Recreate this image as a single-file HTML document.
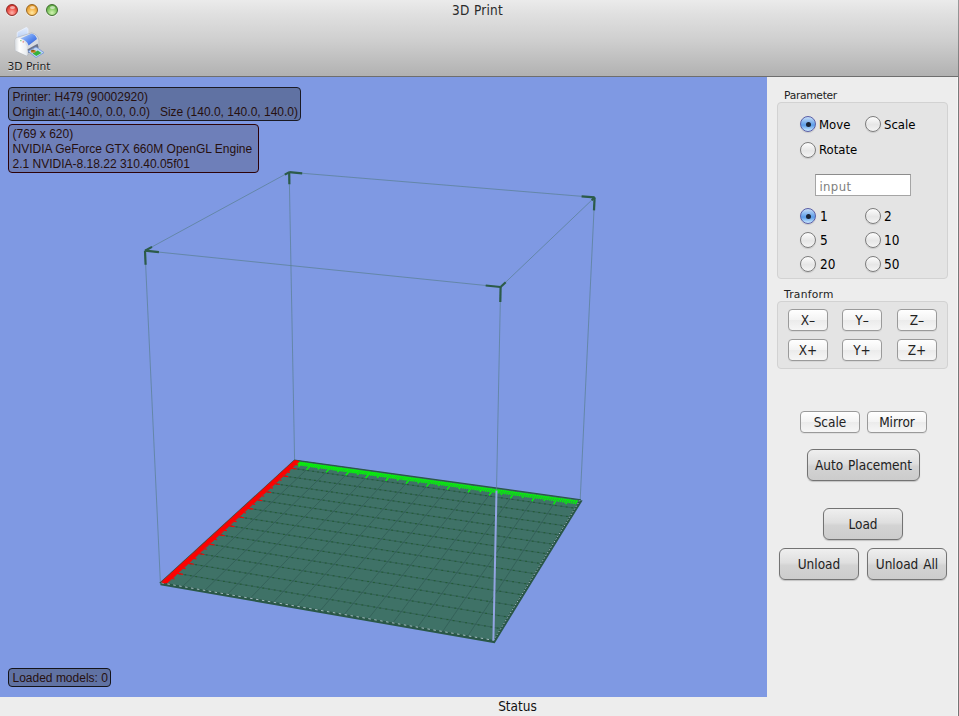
<!DOCTYPE html>
<html><head><meta charset="utf-8"><title>3D Print</title>
<style>
html,body{margin:0;padding:0;}
body{width:959px;height:716px;overflow:hidden;position:relative;background:#ededed;font-family:"DejaVu Sans Condensed","DejaVu Sans","Liberation Sans",sans-serif;color:#1a1a1a;}
.abs{position:absolute;}
#titlebar{left:0;top:0;width:959px;height:76px;background:linear-gradient(#ebebeb 0px,#e0e0e0 14px,#cfcfcf 40px,#b2b2b2 75px);border-bottom:1px solid #6e6e6e;}
#title{left:-2px;width:959px;top:2px;text-align:center;font-size:13.5px;word-spacing:0.5px;letter-spacing:0.2px;line-height:16px;color:#2a2a2a;}
.tl{width:12px;height:12px;border-radius:50%;top:4px;box-sizing:border-box;box-shadow:0 1px 0 rgba(255,255,255,.45);}
.tl::after{content:"";position:absolute;left:2.5px;top:0.5px;width:5px;height:3px;border-radius:50%;background:rgba(255,255,255,.55);}
#tbl{left:0;top:61px;width:58px;text-align:center;font-family:"DejaVu Sans","Liberation Sans",sans-serif;font-size:10.7px;line-height:12px;color:#222;text-shadow:0 1px 0 rgba(255,255,255,.5);}
#view{left:0;top:77px;width:767px;height:620px;background:#7f99e3;overflow:hidden;}
#scene{position:absolute;left:0;top:0;}
.ov{position:absolute;box-sizing:border-box;background:rgba(50,56,67,0.4);border:1px solid #1a1a24;border-radius:4px;font-family:"Liberation Sans",sans-serif;font-size:12px;line-height:15px;color:#26100f;padding:2px 0 0 3.5px;white-space:pre;}
#side{left:767px;top:77px;width:192px;height:639px;background:#ededed;}
.glabel{font-family:"DejaVu Sans","Liberation Sans",sans-serif;font-size:10.7px;line-height:12px;color:#222;}
.gbox{box-sizing:border-box;background:#e4e4e4;border:1px solid #d2d2d2;border-radius:4px;}
.radio{width:16px;height:16px;border-radius:50%;box-sizing:border-box;border:1px solid #7d7d7d;background:linear-gradient(#fdfdfd,#e6e6e6 55%,#f4f4f4);box-shadow:0 1px 1px rgba(0,0,0,.12);}
.radio.on{border-color:#5a5ea6;background:linear-gradient(#c6ddf7,#7db1ed 40%,#5b9de9 58%,#cdeaff);}
.radio.on::after{content:"";position:absolute;left:4.5px;top:4.5px;width:5px;height:5px;border-radius:50%;background:#1b2333;}
.rl{font-size:13px;line-height:16px;color:#000;}
.sbtn{box-sizing:border-box;border:1px solid #9a9a9a;border-radius:4px;background:linear-gradient(#ffffff,#f3f3f3 50%,#ebebeb 51%,#f6f6f6);font-size:13.5px;line-height:21px;text-align:center;color:#222;box-shadow:0 1px 0 rgba(0,0,0,.06);}
.bbtn{box-sizing:border-box;border:1px solid #737373;border-radius:6px;background:linear-gradient(#efefef,#dfdfdf 45%,#d3d3d3 55%,#cccccc);font-size:13.5px;word-spacing:1px;line-height:31px;text-align:center;color:#222;box-shadow:0 1px 1px rgba(0,0,0,.18);}
#input{box-sizing:border-box;left:815px;top:174px;width:96px;height:22px;background:#fff;border:1px solid #a5a5a5;border-top-color:#8c8c8c;font-size:13px;line-height:23px;color:#808080;padding-left:3.5px;letter-spacing:0.35px;}
#status{left:0;top:698px;width:959px;text-align:center;font-size:13.5px;line-height:17px;color:#111;padding-left:76px;box-sizing:border-box;}
</style></head>
<body>
<div id="titlebar" class="abs"></div>
<div class="abs tl" style="left:6px;background:radial-gradient(circle at 50% 78%,#ffb5ad 0,#f2655b 40%,#d8352c 75%,#b5231c 100%);border:1px solid #8f2a26;"></div>
<div class="abs tl" style="left:26px;background:radial-gradient(circle at 50% 78%,#ffe9a6 0,#f7bb55 40%,#e29a2c 75%,#b87716 100%);border:1px solid #9a661e;"></div>
<div class="abs tl" style="left:46px;background:radial-gradient(circle at 50% 78%,#d3f3b5 0,#93d272 40%,#64b046 75%,#3f852b 100%);border:1px solid #3f6f30;"></div>
<div id="title" class="abs">3D Print</div>
<svg class="abs" style="left:12px;top:24px" width="36" height="36" viewBox="0 0 36 36">
  <defs>
    <linearGradient id="pb" x1="0" y1="0" x2="1" y2="1"><stop offset="0" stop-color="#b9d3fb"/><stop offset="0.55" stop-color="#5b8cf0"/><stop offset="1" stop-color="#2a55cf"/></linearGradient>
    <linearGradient id="pf" x1="0" y1="0" x2="1" y2="0"><stop offset="0" stop-color="#d9dde2"/><stop offset="0.35" stop-color="#ffffff"/><stop offset="1" stop-color="#e9ecef"/></linearGradient>
    <linearGradient id="ps" x1="0" y1="0" x2="1" y2="1"><stop offset="0" stop-color="#eef0f3"/><stop offset="1" stop-color="#c9ced6"/></linearGradient>
    <linearGradient id="pp" x1="0" y1="0" x2="0" y2="1"><stop offset="0" stop-color="#e4eefd"/><stop offset="1" stop-color="#b7cdf4"/></linearGradient>
  </defs>
  <path d="M5.2 8.4 L14.6 3.3 L16 4.8 L16 10.5 L6.8 15 L5.2 13.8 Z" fill="url(#pp)" stroke="#eef4ff" stroke-width="0.7"/>
  <path d="M3.1 16 Q3.4 14 5.2 13.4 L19.5 8.9 Q25.8 9.8 26.9 16.2 L26.9 23 L14.8 31.7 L3.4 26.4 Z" fill="url(#ps)" stroke="#aab0ba" stroke-width="0.6"/>
  <path d="M3.1 16 Q3.6 13.6 6 14 Q12.5 15.5 14.9 22.5 L14.8 31.7 L3.4 26.4 Z" fill="url(#pf)"/>
  <path d="M8.6 14.6 L19.6 9.6 Q23.6 10.6 25 15 L16.6 21.4 Q14.5 16 8.6 14.6Z" fill="url(#pb)"/>
  <rect x="8.2" y="16.2" width="1.3" height="1" fill="#5fbf55"/><rect x="10.6" y="17.4" width="1.3" height="1" fill="#e0524a"/>
  <polygon points="15.6,25.2 25.6,19.8 26.6,23.6 16.4,29.4" fill="#59627a" opacity="0.85"/>
  <polygon points="16.1,27.3 24,22.9 32,28.6 24,33.6" fill="#bdd6f7" stroke="#6f93d8" stroke-width="0.8"/>
  <polygon points="20.6,29.4 25.8,26.6 29.4,29 24.3,32" fill="#35b23a"/>
  <ellipse cx="21.3" cy="27.2" rx="2.6" ry="1.5" fill="#c9821f"/>
  <ellipse cx="20.8" cy="26.6" rx="1.6" ry="0.8" fill="#8a5a18"/>
</svg>
<div id="tbl" class="abs">3D Print</div>

<div id="view" class="abs">
<svg id="scene" width="767" height="620" viewBox="0 77 767 620">
<g stroke="#587f90" stroke-width="1" fill="none" stroke-opacity="0.7">
<polygon points="145.0,250.7 289.2,172.2 594.6,197.4 500.6,287.0"/>
<line x1="160.4" y1="582.7" x2="145.0" y2="250.7"/>
<line x1="294.6" y1="460.1" x2="289.2" y2="172.2"/>
<line x1="580.2" y1="499.7" x2="594.6" y2="197.4"/>
</g>
<polygon points="160.4,582.7 294.6,460.1 582.6,500.4 494.7,643.2 160.4,585.3" fill="#2a5748"/>
<polygon points="160.4,582.7 294.6,460.1 580.2,499.7 493.4,640.6" fill="#3f7267" stroke="#2a5848" stroke-width="1.2"/>
<g stroke="#315c55" stroke-width="0.8" fill="none" stroke-opacity="0.9">
<line x1="313.8" y1="462.8" x2="182.5" y2="586.5"/>
<line x1="286.4" y1="467.5" x2="575.0" y2="508.2"/>
<line x1="333.1" y1="465.4" x2="204.8" y2="590.4"/>
<line x1="278.1" y1="475.2" x2="569.7" y2="516.8"/>
<line x1="352.7" y1="468.1" x2="227.4" y2="594.3"/>
<line x1="269.6" y1="483.0" x2="564.2" y2="525.7"/>
<line x1="372.4" y1="470.9" x2="250.2" y2="598.3"/>
<line x1="260.8" y1="491.0" x2="558.6" y2="534.8"/>
<line x1="392.3" y1="473.6" x2="273.3" y2="602.3"/>
<line x1="251.9" y1="499.1" x2="552.8" y2="544.2"/>
<line x1="412.4" y1="476.4" x2="296.6" y2="606.4"/>
<line x1="242.7" y1="507.5" x2="546.9" y2="553.8"/>
<line x1="432.6" y1="479.2" x2="320.3" y2="610.5"/>
<line x1="233.3" y1="516.1" x2="540.8" y2="563.6"/>
<line x1="453.1" y1="482.1" x2="344.1" y2="614.6"/>
<line x1="223.7" y1="524.9" x2="534.6" y2="573.7"/>
<line x1="473.8" y1="484.9" x2="368.3" y2="618.8"/>
<line x1="213.8" y1="533.9" x2="528.2" y2="584.1"/>
<line x1="494.7" y1="487.8" x2="392.7" y2="623.1"/>
<line x1="203.7" y1="543.2" x2="521.6" y2="594.8"/>
<line x1="515.7" y1="490.8" x2="417.5" y2="627.4"/>
<line x1="193.3" y1="552.7" x2="514.9" y2="605.7"/>
<line x1="537.0" y1="493.7" x2="442.5" y2="631.7"/>
<line x1="182.6" y1="562.4" x2="507.9" y2="617.0"/>
<line x1="558.5" y1="496.7" x2="467.8" y2="636.1"/>
<line x1="171.6" y1="572.4" x2="500.8" y2="628.6"/>
</g>
<g fill="#1f5a2c" fill-opacity="0.75">
<rect x="288.0" y="467.3" width="1.8" height="1.2"/>
<rect x="292.8" y="468.0" width="1.8" height="1.2"/>
<rect x="297.6" y="468.6" width="1.8" height="1.2"/>
<rect x="302.5" y="469.3" width="1.8" height="1.2"/>
<rect x="307.3" y="470.0" width="1.8" height="1.2"/>
<rect x="312.2" y="470.7" width="1.8" height="1.2"/>
<rect x="317.1" y="471.4" width="1.8" height="1.2"/>
<rect x="322.0" y="472.1" width="1.8" height="1.2"/>
<rect x="326.9" y="472.8" width="1.8" height="1.2"/>
<rect x="331.8" y="473.5" width="1.8" height="1.2"/>
<rect x="336.7" y="474.2" width="1.8" height="1.2"/>
<rect x="341.7" y="474.8" width="1.8" height="1.2"/>
<rect x="346.6" y="475.5" width="1.8" height="1.2"/>
<rect x="351.6" y="476.2" width="1.8" height="1.2"/>
<rect x="356.6" y="476.9" width="1.8" height="1.2"/>
<rect x="361.6" y="477.6" width="1.8" height="1.2"/>
<rect x="366.6" y="478.4" width="1.8" height="1.2"/>
<rect x="371.6" y="479.1" width="1.8" height="1.2"/>
<rect x="376.6" y="479.8" width="1.8" height="1.2"/>
<rect x="381.7" y="480.5" width="1.8" height="1.2"/>
<rect x="386.7" y="481.2" width="1.8" height="1.2"/>
<rect x="391.8" y="481.9" width="1.8" height="1.2"/>
<rect x="396.8" y="482.6" width="1.8" height="1.2"/>
<rect x="401.9" y="483.3" width="1.8" height="1.2"/>
<rect x="407.0" y="484.0" width="1.8" height="1.2"/>
<rect x="412.1" y="484.8" width="1.8" height="1.2"/>
<rect x="417.2" y="485.5" width="1.8" height="1.2"/>
<rect x="422.4" y="486.2" width="1.8" height="1.2"/>
<rect x="427.5" y="486.9" width="1.8" height="1.2"/>
<rect x="432.7" y="487.7" width="1.8" height="1.2"/>
<rect x="437.9" y="488.4" width="1.8" height="1.2"/>
<rect x="443.0" y="489.1" width="1.8" height="1.2"/>
<rect x="448.2" y="489.8" width="1.8" height="1.2"/>
<rect x="453.5" y="490.6" width="1.8" height="1.2"/>
<rect x="458.7" y="491.3" width="1.8" height="1.2"/>
<rect x="463.9" y="492.0" width="1.8" height="1.2"/>
<rect x="469.2" y="492.8" width="1.8" height="1.2"/>
<rect x="474.4" y="493.5" width="1.8" height="1.2"/>
<rect x="479.7" y="494.3" width="1.8" height="1.2"/>
<rect x="485.0" y="495.0" width="1.8" height="1.2"/>
<rect x="490.3" y="495.8" width="1.8" height="1.2"/>
<rect x="495.6" y="496.5" width="1.8" height="1.2"/>
<rect x="500.9" y="497.3" width="1.8" height="1.2"/>
<rect x="506.2" y="498.0" width="1.8" height="1.2"/>
<rect x="511.6" y="498.8" width="1.8" height="1.2"/>
<rect x="517.0" y="499.5" width="1.8" height="1.2"/>
<rect x="522.3" y="500.3" width="1.8" height="1.2"/>
<rect x="527.7" y="501.0" width="1.8" height="1.2"/>
<rect x="533.1" y="501.8" width="1.8" height="1.2"/>
<rect x="538.6" y="502.6" width="1.8" height="1.2"/>
<rect x="544.0" y="503.3" width="1.8" height="1.2"/>
<rect x="549.4" y="504.1" width="1.8" height="1.2"/>
<rect x="554.9" y="504.9" width="1.8" height="1.2"/>
<rect x="560.4" y="505.6" width="1.8" height="1.2"/>
<rect x="565.8" y="506.4" width="1.8" height="1.2"/>
<rect x="571.3" y="507.2" width="1.8" height="1.2"/>
<rect x="279.6" y="474.9" width="1.8" height="1.2"/>
<rect x="284.5" y="475.6" width="1.8" height="1.2"/>
<rect x="289.4" y="476.3" width="1.8" height="1.2"/>
<rect x="294.3" y="477.0" width="1.8" height="1.2"/>
<rect x="299.2" y="477.7" width="1.8" height="1.2"/>
<rect x="304.1" y="478.4" width="1.8" height="1.2"/>
<rect x="309.1" y="479.1" width="1.8" height="1.2"/>
<rect x="314.0" y="479.8" width="1.8" height="1.2"/>
<rect x="319.0" y="480.5" width="1.8" height="1.2"/>
<rect x="323.9" y="481.2" width="1.8" height="1.2"/>
<rect x="328.9" y="482.0" width="1.8" height="1.2"/>
<rect x="333.9" y="482.7" width="1.8" height="1.2"/>
<rect x="338.9" y="483.4" width="1.8" height="1.2"/>
<rect x="343.9" y="484.1" width="1.8" height="1.2"/>
<rect x="348.9" y="484.8" width="1.8" height="1.2"/>
<rect x="354.0" y="485.5" width="1.8" height="1.2"/>
<rect x="359.0" y="486.3" width="1.8" height="1.2"/>
<rect x="364.1" y="487.0" width="1.8" height="1.2"/>
<rect x="369.2" y="487.7" width="1.8" height="1.2"/>
<rect x="374.3" y="488.4" width="1.8" height="1.2"/>
<rect x="379.4" y="489.2" width="1.8" height="1.2"/>
<rect x="384.5" y="489.9" width="1.8" height="1.2"/>
<rect x="389.6" y="490.6" width="1.8" height="1.2"/>
<rect x="394.7" y="491.4" width="1.8" height="1.2"/>
<rect x="399.9" y="492.1" width="1.8" height="1.2"/>
<rect x="405.0" y="492.8" width="1.8" height="1.2"/>
<rect x="410.2" y="493.6" width="1.8" height="1.2"/>
<rect x="415.4" y="494.3" width="1.8" height="1.2"/>
<rect x="420.6" y="495.1" width="1.8" height="1.2"/>
<rect x="425.8" y="495.8" width="1.8" height="1.2"/>
<rect x="431.0" y="496.5" width="1.8" height="1.2"/>
<rect x="436.3" y="497.3" width="1.8" height="1.2"/>
<rect x="441.5" y="498.0" width="1.8" height="1.2"/>
<rect x="446.8" y="498.8" width="1.8" height="1.2"/>
<rect x="452.1" y="499.6" width="1.8" height="1.2"/>
<rect x="457.4" y="500.3" width="1.8" height="1.2"/>
<rect x="462.7" y="501.1" width="1.8" height="1.2"/>
<rect x="468.0" y="501.8" width="1.8" height="1.2"/>
<rect x="473.3" y="502.6" width="1.8" height="1.2"/>
<rect x="478.7" y="503.3" width="1.8" height="1.2"/>
<rect x="484.0" y="504.1" width="1.8" height="1.2"/>
<rect x="489.4" y="504.9" width="1.8" height="1.2"/>
<rect x="494.8" y="505.7" width="1.8" height="1.2"/>
<rect x="500.2" y="506.4" width="1.8" height="1.2"/>
<rect x="505.6" y="507.2" width="1.8" height="1.2"/>
<rect x="511.0" y="508.0" width="1.8" height="1.2"/>
<rect x="516.4" y="508.7" width="1.8" height="1.2"/>
<rect x="521.9" y="509.5" width="1.8" height="1.2"/>
<rect x="527.3" y="510.3" width="1.8" height="1.2"/>
<rect x="532.8" y="511.1" width="1.8" height="1.2"/>
<rect x="538.3" y="511.9" width="1.8" height="1.2"/>
<rect x="543.8" y="512.7" width="1.8" height="1.2"/>
<rect x="549.3" y="513.4" width="1.8" height="1.2"/>
<rect x="554.9" y="514.2" width="1.8" height="1.2"/>
<rect x="560.4" y="515.0" width="1.8" height="1.2"/>
<rect x="566.0" y="515.8" width="1.8" height="1.2"/>
<rect x="271.1" y="482.7" width="1.8" height="1.2"/>
<rect x="276.0" y="483.4" width="1.8" height="1.2"/>
<rect x="281.0" y="484.2" width="1.8" height="1.2"/>
<rect x="285.9" y="484.9" width="1.8" height="1.2"/>
<rect x="290.9" y="485.6" width="1.8" height="1.2"/>
<rect x="295.8" y="486.3" width="1.8" height="1.2"/>
<rect x="300.8" y="487.0" width="1.8" height="1.2"/>
<rect x="305.8" y="487.8" width="1.8" height="1.2"/>
<rect x="310.8" y="488.5" width="1.8" height="1.2"/>
<rect x="315.8" y="489.2" width="1.8" height="1.2"/>
<rect x="320.9" y="489.9" width="1.8" height="1.2"/>
<rect x="325.9" y="490.7" width="1.8" height="1.2"/>
<rect x="331.0" y="491.4" width="1.8" height="1.2"/>
<rect x="336.0" y="492.1" width="1.8" height="1.2"/>
<rect x="341.1" y="492.9" width="1.8" height="1.2"/>
<rect x="346.2" y="493.6" width="1.8" height="1.2"/>
<rect x="351.3" y="494.4" width="1.8" height="1.2"/>
<rect x="356.4" y="495.1" width="1.8" height="1.2"/>
<rect x="361.5" y="495.8" width="1.8" height="1.2"/>
<rect x="366.7" y="496.6" width="1.8" height="1.2"/>
<rect x="371.8" y="497.3" width="1.8" height="1.2"/>
<rect x="377.0" y="498.1" width="1.8" height="1.2"/>
<rect x="382.2" y="498.8" width="1.8" height="1.2"/>
<rect x="387.4" y="499.6" width="1.8" height="1.2"/>
<rect x="392.6" y="500.3" width="1.8" height="1.2"/>
<rect x="397.8" y="501.1" width="1.8" height="1.2"/>
<rect x="403.0" y="501.9" width="1.8" height="1.2"/>
<rect x="408.3" y="502.6" width="1.8" height="1.2"/>
<rect x="413.5" y="503.4" width="1.8" height="1.2"/>
<rect x="418.8" y="504.1" width="1.8" height="1.2"/>
<rect x="424.1" y="504.9" width="1.8" height="1.2"/>
<rect x="429.4" y="505.7" width="1.8" height="1.2"/>
<rect x="434.7" y="506.4" width="1.8" height="1.2"/>
<rect x="440.0" y="507.2" width="1.8" height="1.2"/>
<rect x="445.3" y="508.0" width="1.8" height="1.2"/>
<rect x="450.7" y="508.8" width="1.8" height="1.2"/>
<rect x="456.0" y="509.5" width="1.8" height="1.2"/>
<rect x="461.4" y="510.3" width="1.8" height="1.2"/>
<rect x="466.8" y="511.1" width="1.8" height="1.2"/>
<rect x="472.2" y="511.9" width="1.8" height="1.2"/>
<rect x="477.6" y="512.7" width="1.8" height="1.2"/>
<rect x="483.0" y="513.5" width="1.8" height="1.2"/>
<rect x="488.5" y="514.3" width="1.8" height="1.2"/>
<rect x="493.9" y="515.0" width="1.8" height="1.2"/>
<rect x="499.4" y="515.8" width="1.8" height="1.2"/>
<rect x="504.9" y="516.6" width="1.8" height="1.2"/>
<rect x="510.4" y="517.4" width="1.8" height="1.2"/>
<rect x="515.9" y="518.2" width="1.8" height="1.2"/>
<rect x="521.4" y="519.0" width="1.8" height="1.2"/>
<rect x="526.9" y="519.8" width="1.8" height="1.2"/>
<rect x="532.5" y="520.6" width="1.8" height="1.2"/>
<rect x="538.1" y="521.4" width="1.8" height="1.2"/>
<rect x="543.6" y="522.3" width="1.8" height="1.2"/>
<rect x="549.2" y="523.1" width="1.8" height="1.2"/>
<rect x="554.8" y="523.9" width="1.8" height="1.2"/>
<rect x="560.5" y="524.7" width="1.8" height="1.2"/>
<rect x="262.4" y="490.7" width="1.8" height="1.2"/>
<rect x="267.4" y="491.5" width="1.8" height="1.2"/>
<rect x="272.4" y="492.2" width="1.8" height="1.2"/>
<rect x="277.3" y="492.9" width="1.8" height="1.2"/>
<rect x="282.4" y="493.7" width="1.8" height="1.2"/>
<rect x="287.4" y="494.4" width="1.8" height="1.2"/>
<rect x="292.4" y="495.1" width="1.8" height="1.2"/>
<rect x="297.4" y="495.9" width="1.8" height="1.2"/>
<rect x="302.5" y="496.6" width="1.8" height="1.2"/>
<rect x="307.6" y="497.4" width="1.8" height="1.2"/>
<rect x="312.6" y="498.1" width="1.8" height="1.2"/>
<rect x="317.7" y="498.9" width="1.8" height="1.2"/>
<rect x="322.8" y="499.6" width="1.8" height="1.2"/>
<rect x="328.0" y="500.4" width="1.8" height="1.2"/>
<rect x="333.1" y="501.1" width="1.8" height="1.2"/>
<rect x="338.2" y="501.9" width="1.8" height="1.2"/>
<rect x="343.4" y="502.7" width="1.8" height="1.2"/>
<rect x="348.6" y="503.4" width="1.8" height="1.2"/>
<rect x="353.7" y="504.2" width="1.8" height="1.2"/>
<rect x="358.9" y="504.9" width="1.8" height="1.2"/>
<rect x="364.1" y="505.7" width="1.8" height="1.2"/>
<rect x="369.4" y="506.5" width="1.8" height="1.2"/>
<rect x="374.6" y="507.2" width="1.8" height="1.2"/>
<rect x="379.8" y="508.0" width="1.8" height="1.2"/>
<rect x="385.1" y="508.8" width="1.8" height="1.2"/>
<rect x="390.4" y="509.6" width="1.8" height="1.2"/>
<rect x="395.6" y="510.3" width="1.8" height="1.2"/>
<rect x="400.9" y="511.1" width="1.8" height="1.2"/>
<rect x="406.2" y="511.9" width="1.8" height="1.2"/>
<rect x="411.6" y="512.7" width="1.8" height="1.2"/>
<rect x="416.9" y="513.5" width="1.8" height="1.2"/>
<rect x="422.3" y="514.3" width="1.8" height="1.2"/>
<rect x="427.6" y="515.1" width="1.8" height="1.2"/>
<rect x="433.0" y="515.9" width="1.8" height="1.2"/>
<rect x="438.4" y="516.6" width="1.8" height="1.2"/>
<rect x="443.8" y="517.4" width="1.8" height="1.2"/>
<rect x="449.2" y="518.2" width="1.8" height="1.2"/>
<rect x="454.6" y="519.0" width="1.8" height="1.2"/>
<rect x="460.1" y="519.8" width="1.8" height="1.2"/>
<rect x="465.6" y="520.6" width="1.8" height="1.2"/>
<rect x="471.0" y="521.5" width="1.8" height="1.2"/>
<rect x="476.5" y="522.3" width="1.8" height="1.2"/>
<rect x="482.0" y="523.1" width="1.8" height="1.2"/>
<rect x="487.5" y="523.9" width="1.8" height="1.2"/>
<rect x="493.1" y="524.7" width="1.8" height="1.2"/>
<rect x="498.6" y="525.5" width="1.8" height="1.2"/>
<rect x="504.2" y="526.3" width="1.8" height="1.2"/>
<rect x="509.7" y="527.2" width="1.8" height="1.2"/>
<rect x="515.3" y="528.0" width="1.8" height="1.2"/>
<rect x="520.9" y="528.8" width="1.8" height="1.2"/>
<rect x="526.5" y="529.6" width="1.8" height="1.2"/>
<rect x="532.2" y="530.5" width="1.8" height="1.2"/>
<rect x="537.8" y="531.3" width="1.8" height="1.2"/>
<rect x="543.5" y="532.1" width="1.8" height="1.2"/>
<rect x="549.1" y="533.0" width="1.8" height="1.2"/>
<rect x="554.8" y="533.8" width="1.8" height="1.2"/>
<rect x="253.5" y="498.9" width="1.8" height="1.2"/>
<rect x="258.5" y="499.7" width="1.8" height="1.2"/>
<rect x="263.5" y="500.4" width="1.8" height="1.2"/>
<rect x="268.6" y="501.2" width="1.8" height="1.2"/>
<rect x="273.6" y="501.9" width="1.8" height="1.2"/>
<rect x="278.7" y="502.7" width="1.8" height="1.2"/>
<rect x="283.8" y="503.4" width="1.8" height="1.2"/>
<rect x="288.9" y="504.2" width="1.8" height="1.2"/>
<rect x="294.0" y="505.0" width="1.8" height="1.2"/>
<rect x="299.1" y="505.7" width="1.8" height="1.2"/>
<rect x="304.2" y="506.5" width="1.8" height="1.2"/>
<rect x="309.4" y="507.3" width="1.8" height="1.2"/>
<rect x="314.5" y="508.0" width="1.8" height="1.2"/>
<rect x="319.7" y="508.8" width="1.8" height="1.2"/>
<rect x="324.9" y="509.6" width="1.8" height="1.2"/>
<rect x="330.1" y="510.4" width="1.8" height="1.2"/>
<rect x="335.3" y="511.1" width="1.8" height="1.2"/>
<rect x="340.5" y="511.9" width="1.8" height="1.2"/>
<rect x="345.7" y="512.7" width="1.8" height="1.2"/>
<rect x="351.0" y="513.5" width="1.8" height="1.2"/>
<rect x="356.2" y="514.3" width="1.8" height="1.2"/>
<rect x="361.5" y="515.1" width="1.8" height="1.2"/>
<rect x="366.8" y="515.9" width="1.8" height="1.2"/>
<rect x="372.1" y="516.7" width="1.8" height="1.2"/>
<rect x="377.4" y="517.5" width="1.8" height="1.2"/>
<rect x="382.7" y="518.3" width="1.8" height="1.2"/>
<rect x="388.1" y="519.1" width="1.8" height="1.2"/>
<rect x="393.4" y="519.9" width="1.8" height="1.2"/>
<rect x="398.8" y="520.7" width="1.8" height="1.2"/>
<rect x="404.2" y="521.5" width="1.8" height="1.2"/>
<rect x="409.6" y="522.3" width="1.8" height="1.2"/>
<rect x="415.0" y="523.1" width="1.8" height="1.2"/>
<rect x="420.4" y="523.9" width="1.8" height="1.2"/>
<rect x="425.8" y="524.7" width="1.8" height="1.2"/>
<rect x="431.3" y="525.5" width="1.8" height="1.2"/>
<rect x="436.8" y="526.3" width="1.8" height="1.2"/>
<rect x="442.2" y="527.2" width="1.8" height="1.2"/>
<rect x="447.7" y="528.0" width="1.8" height="1.2"/>
<rect x="453.2" y="528.8" width="1.8" height="1.2"/>
<rect x="458.7" y="529.6" width="1.8" height="1.2"/>
<rect x="464.3" y="530.5" width="1.8" height="1.2"/>
<rect x="469.8" y="531.3" width="1.8" height="1.2"/>
<rect x="475.4" y="532.1" width="1.8" height="1.2"/>
<rect x="481.0" y="532.9" width="1.8" height="1.2"/>
<rect x="486.6" y="533.8" width="1.8" height="1.2"/>
<rect x="492.2" y="534.6" width="1.8" height="1.2"/>
<rect x="497.8" y="535.5" width="1.8" height="1.2"/>
<rect x="503.4" y="536.3" width="1.8" height="1.2"/>
<rect x="509.1" y="537.2" width="1.8" height="1.2"/>
<rect x="514.7" y="538.0" width="1.8" height="1.2"/>
<rect x="520.4" y="538.8" width="1.8" height="1.2"/>
<rect x="526.1" y="539.7" width="1.8" height="1.2"/>
<rect x="531.8" y="540.6" width="1.8" height="1.2"/>
<rect x="537.5" y="541.4" width="1.8" height="1.2"/>
<rect x="543.3" y="542.3" width="1.8" height="1.2"/>
<rect x="549.0" y="543.1" width="1.8" height="1.2"/>
<rect x="244.3" y="507.3" width="1.8" height="1.2"/>
<rect x="249.4" y="508.1" width="1.8" height="1.2"/>
<rect x="254.5" y="508.8" width="1.8" height="1.2"/>
<rect x="259.6" y="509.6" width="1.8" height="1.2"/>
<rect x="264.7" y="510.4" width="1.8" height="1.2"/>
<rect x="269.8" y="511.2" width="1.8" height="1.2"/>
<rect x="274.9" y="512.0" width="1.8" height="1.2"/>
<rect x="280.1" y="512.7" width="1.8" height="1.2"/>
<rect x="285.2" y="513.5" width="1.8" height="1.2"/>
<rect x="290.4" y="514.3" width="1.8" height="1.2"/>
<rect x="295.6" y="515.1" width="1.8" height="1.2"/>
<rect x="300.8" y="515.9" width="1.8" height="1.2"/>
<rect x="306.0" y="516.7" width="1.8" height="1.2"/>
<rect x="311.2" y="517.5" width="1.8" height="1.2"/>
<rect x="316.5" y="518.3" width="1.8" height="1.2"/>
<rect x="321.7" y="519.1" width="1.8" height="1.2"/>
<rect x="327.0" y="519.9" width="1.8" height="1.2"/>
<rect x="332.2" y="520.7" width="1.8" height="1.2"/>
<rect x="337.5" y="521.5" width="1.8" height="1.2"/>
<rect x="342.8" y="522.3" width="1.8" height="1.2"/>
<rect x="348.1" y="523.1" width="1.8" height="1.2"/>
<rect x="353.5" y="523.9" width="1.8" height="1.2"/>
<rect x="358.8" y="524.7" width="1.8" height="1.2"/>
<rect x="364.2" y="525.5" width="1.8" height="1.2"/>
<rect x="369.5" y="526.3" width="1.8" height="1.2"/>
<rect x="374.9" y="527.2" width="1.8" height="1.2"/>
<rect x="380.3" y="528.0" width="1.8" height="1.2"/>
<rect x="385.7" y="528.8" width="1.8" height="1.2"/>
<rect x="391.2" y="529.6" width="1.8" height="1.2"/>
<rect x="396.6" y="530.4" width="1.8" height="1.2"/>
<rect x="402.1" y="531.3" width="1.8" height="1.2"/>
<rect x="407.5" y="532.1" width="1.8" height="1.2"/>
<rect x="413.0" y="532.9" width="1.8" height="1.2"/>
<rect x="418.5" y="533.8" width="1.8" height="1.2"/>
<rect x="424.0" y="534.6" width="1.8" height="1.2"/>
<rect x="429.5" y="535.5" width="1.8" height="1.2"/>
<rect x="435.1" y="536.3" width="1.8" height="1.2"/>
<rect x="440.6" y="537.1" width="1.8" height="1.2"/>
<rect x="446.2" y="538.0" width="1.8" height="1.2"/>
<rect x="451.8" y="538.8" width="1.8" height="1.2"/>
<rect x="457.4" y="539.7" width="1.8" height="1.2"/>
<rect x="463.0" y="540.5" width="1.8" height="1.2"/>
<rect x="468.6" y="541.4" width="1.8" height="1.2"/>
<rect x="474.2" y="542.2" width="1.8" height="1.2"/>
<rect x="479.9" y="543.1" width="1.8" height="1.2"/>
<rect x="485.6" y="544.0" width="1.8" height="1.2"/>
<rect x="491.2" y="544.8" width="1.8" height="1.2"/>
<rect x="496.9" y="545.7" width="1.8" height="1.2"/>
<rect x="502.7" y="546.6" width="1.8" height="1.2"/>
<rect x="508.4" y="547.4" width="1.8" height="1.2"/>
<rect x="514.1" y="548.3" width="1.8" height="1.2"/>
<rect x="519.9" y="549.2" width="1.8" height="1.2"/>
<rect x="525.7" y="550.1" width="1.8" height="1.2"/>
<rect x="531.5" y="550.9" width="1.8" height="1.2"/>
<rect x="537.3" y="551.8" width="1.8" height="1.2"/>
<rect x="543.1" y="552.7" width="1.8" height="1.2"/>
<rect x="235.0" y="515.9" width="1.8" height="1.2"/>
<rect x="240.1" y="516.7" width="1.8" height="1.2"/>
<rect x="245.2" y="517.5" width="1.8" height="1.2"/>
<rect x="250.4" y="518.3" width="1.8" height="1.2"/>
<rect x="255.5" y="519.1" width="1.8" height="1.2"/>
<rect x="260.7" y="519.9" width="1.8" height="1.2"/>
<rect x="265.9" y="520.7" width="1.8" height="1.2"/>
<rect x="271.1" y="521.5" width="1.8" height="1.2"/>
<rect x="276.3" y="522.3" width="1.8" height="1.2"/>
<rect x="281.5" y="523.1" width="1.8" height="1.2"/>
<rect x="286.7" y="523.9" width="1.8" height="1.2"/>
<rect x="292.0" y="524.7" width="1.8" height="1.2"/>
<rect x="297.3" y="525.5" width="1.8" height="1.2"/>
<rect x="302.5" y="526.3" width="1.8" height="1.2"/>
<rect x="307.8" y="527.1" width="1.8" height="1.2"/>
<rect x="313.1" y="528.0" width="1.8" height="1.2"/>
<rect x="318.4" y="528.8" width="1.8" height="1.2"/>
<rect x="323.8" y="529.6" width="1.8" height="1.2"/>
<rect x="329.1" y="530.4" width="1.8" height="1.2"/>
<rect x="334.5" y="531.3" width="1.8" height="1.2"/>
<rect x="339.8" y="532.1" width="1.8" height="1.2"/>
<rect x="345.2" y="532.9" width="1.8" height="1.2"/>
<rect x="350.6" y="533.8" width="1.8" height="1.2"/>
<rect x="356.0" y="534.6" width="1.8" height="1.2"/>
<rect x="361.5" y="535.4" width="1.8" height="1.2"/>
<rect x="366.9" y="536.3" width="1.8" height="1.2"/>
<rect x="372.4" y="537.1" width="1.8" height="1.2"/>
<rect x="377.8" y="538.0" width="1.8" height="1.2"/>
<rect x="383.3" y="538.8" width="1.8" height="1.2"/>
<rect x="388.8" y="539.7" width="1.8" height="1.2"/>
<rect x="394.3" y="540.5" width="1.8" height="1.2"/>
<rect x="399.9" y="541.4" width="1.8" height="1.2"/>
<rect x="405.4" y="542.2" width="1.8" height="1.2"/>
<rect x="411.0" y="543.1" width="1.8" height="1.2"/>
<rect x="416.5" y="543.9" width="1.8" height="1.2"/>
<rect x="422.1" y="544.8" width="1.8" height="1.2"/>
<rect x="427.7" y="545.7" width="1.8" height="1.2"/>
<rect x="433.3" y="546.5" width="1.8" height="1.2"/>
<rect x="439.0" y="547.4" width="1.8" height="1.2"/>
<rect x="444.6" y="548.3" width="1.8" height="1.2"/>
<rect x="450.3" y="549.2" width="1.8" height="1.2"/>
<rect x="455.9" y="550.0" width="1.8" height="1.2"/>
<rect x="461.6" y="550.9" width="1.8" height="1.2"/>
<rect x="467.3" y="551.8" width="1.8" height="1.2"/>
<rect x="473.1" y="552.7" width="1.8" height="1.2"/>
<rect x="478.8" y="553.6" width="1.8" height="1.2"/>
<rect x="484.5" y="554.4" width="1.8" height="1.2"/>
<rect x="490.3" y="555.3" width="1.8" height="1.2"/>
<rect x="496.1" y="556.2" width="1.8" height="1.2"/>
<rect x="501.9" y="557.1" width="1.8" height="1.2"/>
<rect x="507.7" y="558.0" width="1.8" height="1.2"/>
<rect x="513.5" y="558.9" width="1.8" height="1.2"/>
<rect x="519.4" y="559.8" width="1.8" height="1.2"/>
<rect x="525.2" y="560.7" width="1.8" height="1.2"/>
<rect x="531.1" y="561.6" width="1.8" height="1.2"/>
<rect x="537.0" y="562.5" width="1.8" height="1.2"/>
<rect x="225.3" y="524.7" width="1.8" height="1.2"/>
<rect x="230.5" y="525.5" width="1.8" height="1.2"/>
<rect x="235.7" y="526.3" width="1.8" height="1.2"/>
<rect x="240.9" y="527.1" width="1.8" height="1.2"/>
<rect x="246.1" y="528.0" width="1.8" height="1.2"/>
<rect x="251.3" y="528.8" width="1.8" height="1.2"/>
<rect x="256.6" y="529.6" width="1.8" height="1.2"/>
<rect x="261.8" y="530.4" width="1.8" height="1.2"/>
<rect x="267.1" y="531.3" width="1.8" height="1.2"/>
<rect x="272.4" y="532.1" width="1.8" height="1.2"/>
<rect x="277.7" y="532.9" width="1.8" height="1.2"/>
<rect x="283.0" y="533.8" width="1.8" height="1.2"/>
<rect x="288.3" y="534.6" width="1.8" height="1.2"/>
<rect x="293.6" y="535.4" width="1.8" height="1.2"/>
<rect x="299.0" y="536.3" width="1.8" height="1.2"/>
<rect x="304.3" y="537.1" width="1.8" height="1.2"/>
<rect x="309.7" y="537.9" width="1.8" height="1.2"/>
<rect x="315.1" y="538.8" width="1.8" height="1.2"/>
<rect x="320.5" y="539.6" width="1.8" height="1.2"/>
<rect x="325.9" y="540.5" width="1.8" height="1.2"/>
<rect x="331.3" y="541.3" width="1.8" height="1.2"/>
<rect x="336.8" y="542.2" width="1.8" height="1.2"/>
<rect x="342.2" y="543.1" width="1.8" height="1.2"/>
<rect x="347.7" y="543.9" width="1.8" height="1.2"/>
<rect x="353.2" y="544.8" width="1.8" height="1.2"/>
<rect x="358.7" y="545.6" width="1.8" height="1.2"/>
<rect x="364.2" y="546.5" width="1.8" height="1.2"/>
<rect x="369.7" y="547.4" width="1.8" height="1.2"/>
<rect x="375.3" y="548.2" width="1.8" height="1.2"/>
<rect x="380.9" y="549.1" width="1.8" height="1.2"/>
<rect x="386.4" y="550.0" width="1.8" height="1.2"/>
<rect x="392.0" y="550.9" width="1.8" height="1.2"/>
<rect x="397.6" y="551.7" width="1.8" height="1.2"/>
<rect x="403.2" y="552.6" width="1.8" height="1.2"/>
<rect x="408.9" y="553.5" width="1.8" height="1.2"/>
<rect x="414.5" y="554.4" width="1.8" height="1.2"/>
<rect x="420.2" y="555.3" width="1.8" height="1.2"/>
<rect x="425.9" y="556.2" width="1.8" height="1.2"/>
<rect x="431.6" y="557.1" width="1.8" height="1.2"/>
<rect x="437.3" y="558.0" width="1.8" height="1.2"/>
<rect x="443.0" y="558.9" width="1.8" height="1.2"/>
<rect x="448.7" y="559.8" width="1.8" height="1.2"/>
<rect x="454.5" y="560.7" width="1.8" height="1.2"/>
<rect x="460.3" y="561.6" width="1.8" height="1.2"/>
<rect x="466.0" y="562.5" width="1.8" height="1.2"/>
<rect x="471.8" y="563.4" width="1.8" height="1.2"/>
<rect x="477.7" y="564.3" width="1.8" height="1.2"/>
<rect x="483.5" y="565.2" width="1.8" height="1.2"/>
<rect x="489.3" y="566.1" width="1.8" height="1.2"/>
<rect x="495.2" y="567.1" width="1.8" height="1.2"/>
<rect x="501.1" y="568.0" width="1.8" height="1.2"/>
<rect x="507.0" y="568.9" width="1.8" height="1.2"/>
<rect x="512.9" y="569.8" width="1.8" height="1.2"/>
<rect x="518.8" y="570.8" width="1.8" height="1.2"/>
<rect x="524.8" y="571.7" width="1.8" height="1.2"/>
<rect x="530.7" y="572.6" width="1.8" height="1.2"/>
<rect x="215.5" y="533.7" width="1.8" height="1.2"/>
<rect x="220.7" y="534.6" width="1.8" height="1.2"/>
<rect x="226.0" y="535.4" width="1.8" height="1.2"/>
<rect x="231.2" y="536.2" width="1.8" height="1.2"/>
<rect x="236.5" y="537.1" width="1.8" height="1.2"/>
<rect x="241.8" y="537.9" width="1.8" height="1.2"/>
<rect x="247.0" y="538.8" width="1.8" height="1.2"/>
<rect x="252.4" y="539.6" width="1.8" height="1.2"/>
<rect x="257.7" y="540.5" width="1.8" height="1.2"/>
<rect x="263.0" y="541.3" width="1.8" height="1.2"/>
<rect x="268.4" y="542.2" width="1.8" height="1.2"/>
<rect x="273.7" y="543.0" width="1.8" height="1.2"/>
<rect x="279.1" y="543.9" width="1.8" height="1.2"/>
<rect x="284.5" y="544.7" width="1.8" height="1.2"/>
<rect x="289.9" y="545.6" width="1.8" height="1.2"/>
<rect x="295.3" y="546.5" width="1.8" height="1.2"/>
<rect x="300.7" y="547.3" width="1.8" height="1.2"/>
<rect x="306.2" y="548.2" width="1.8" height="1.2"/>
<rect x="311.6" y="549.1" width="1.8" height="1.2"/>
<rect x="317.1" y="550.0" width="1.8" height="1.2"/>
<rect x="322.6" y="550.8" width="1.8" height="1.2"/>
<rect x="328.1" y="551.7" width="1.8" height="1.2"/>
<rect x="333.6" y="552.6" width="1.8" height="1.2"/>
<rect x="339.2" y="553.5" width="1.8" height="1.2"/>
<rect x="344.7" y="554.4" width="1.8" height="1.2"/>
<rect x="350.3" y="555.2" width="1.8" height="1.2"/>
<rect x="355.8" y="556.1" width="1.8" height="1.2"/>
<rect x="361.4" y="557.0" width="1.8" height="1.2"/>
<rect x="367.0" y="557.9" width="1.8" height="1.2"/>
<rect x="372.7" y="558.8" width="1.8" height="1.2"/>
<rect x="378.3" y="559.7" width="1.8" height="1.2"/>
<rect x="384.0" y="560.6" width="1.8" height="1.2"/>
<rect x="389.6" y="561.5" width="1.8" height="1.2"/>
<rect x="395.3" y="562.4" width="1.8" height="1.2"/>
<rect x="401.0" y="563.3" width="1.8" height="1.2"/>
<rect x="406.7" y="564.3" width="1.8" height="1.2"/>
<rect x="412.4" y="565.2" width="1.8" height="1.2"/>
<rect x="418.2" y="566.1" width="1.8" height="1.2"/>
<rect x="423.9" y="567.0" width="1.8" height="1.2"/>
<rect x="429.7" y="567.9" width="1.8" height="1.2"/>
<rect x="435.5" y="568.9" width="1.8" height="1.2"/>
<rect x="441.3" y="569.8" width="1.8" height="1.2"/>
<rect x="447.1" y="570.7" width="1.8" height="1.2"/>
<rect x="453.0" y="571.6" width="1.8" height="1.2"/>
<rect x="458.8" y="572.6" width="1.8" height="1.2"/>
<rect x="464.7" y="573.5" width="1.8" height="1.2"/>
<rect x="470.6" y="574.4" width="1.8" height="1.2"/>
<rect x="476.5" y="575.4" width="1.8" height="1.2"/>
<rect x="482.4" y="576.3" width="1.8" height="1.2"/>
<rect x="488.3" y="577.3" width="1.8" height="1.2"/>
<rect x="494.3" y="578.2" width="1.8" height="1.2"/>
<rect x="500.3" y="579.2" width="1.8" height="1.2"/>
<rect x="506.2" y="580.1" width="1.8" height="1.2"/>
<rect x="512.2" y="581.1" width="1.8" height="1.2"/>
<rect x="518.3" y="582.1" width="1.8" height="1.2"/>
<rect x="524.3" y="583.0" width="1.8" height="1.2"/>
<rect x="205.4" y="543.0" width="1.8" height="1.2"/>
<rect x="210.7" y="543.9" width="1.8" height="1.2"/>
<rect x="216.0" y="544.7" width="1.8" height="1.2"/>
<rect x="221.3" y="545.6" width="1.8" height="1.2"/>
<rect x="226.6" y="546.4" width="1.8" height="1.2"/>
<rect x="231.9" y="547.3" width="1.8" height="1.2"/>
<rect x="237.3" y="548.2" width="1.8" height="1.2"/>
<rect x="242.6" y="549.0" width="1.8" height="1.2"/>
<rect x="248.0" y="549.9" width="1.8" height="1.2"/>
<rect x="253.4" y="550.8" width="1.8" height="1.2"/>
<rect x="258.8" y="551.7" width="1.8" height="1.2"/>
<rect x="264.2" y="552.6" width="1.8" height="1.2"/>
<rect x="269.7" y="553.4" width="1.8" height="1.2"/>
<rect x="275.1" y="554.3" width="1.8" height="1.2"/>
<rect x="280.6" y="555.2" width="1.8" height="1.2"/>
<rect x="286.0" y="556.1" width="1.8" height="1.2"/>
<rect x="291.5" y="557.0" width="1.8" height="1.2"/>
<rect x="297.0" y="557.9" width="1.8" height="1.2"/>
<rect x="302.6" y="558.8" width="1.8" height="1.2"/>
<rect x="308.1" y="559.7" width="1.8" height="1.2"/>
<rect x="313.6" y="560.6" width="1.8" height="1.2"/>
<rect x="319.2" y="561.5" width="1.8" height="1.2"/>
<rect x="324.8" y="562.4" width="1.8" height="1.2"/>
<rect x="330.4" y="563.3" width="1.8" height="1.2"/>
<rect x="336.0" y="564.2" width="1.8" height="1.2"/>
<rect x="341.6" y="565.1" width="1.8" height="1.2"/>
<rect x="347.3" y="566.0" width="1.8" height="1.2"/>
<rect x="352.9" y="566.9" width="1.8" height="1.2"/>
<rect x="358.6" y="567.9" width="1.8" height="1.2"/>
<rect x="364.3" y="568.8" width="1.8" height="1.2"/>
<rect x="370.0" y="569.7" width="1.8" height="1.2"/>
<rect x="375.7" y="570.6" width="1.8" height="1.2"/>
<rect x="381.4" y="571.6" width="1.8" height="1.2"/>
<rect x="387.2" y="572.5" width="1.8" height="1.2"/>
<rect x="392.9" y="573.4" width="1.8" height="1.2"/>
<rect x="398.7" y="574.4" width="1.8" height="1.2"/>
<rect x="404.5" y="575.3" width="1.8" height="1.2"/>
<rect x="410.3" y="576.3" width="1.8" height="1.2"/>
<rect x="416.1" y="577.2" width="1.8" height="1.2"/>
<rect x="422.0" y="578.1" width="1.8" height="1.2"/>
<rect x="427.8" y="579.1" width="1.8" height="1.2"/>
<rect x="433.7" y="580.1" width="1.8" height="1.2"/>
<rect x="439.6" y="581.0" width="1.8" height="1.2"/>
<rect x="445.5" y="582.0" width="1.8" height="1.2"/>
<rect x="451.4" y="582.9" width="1.8" height="1.2"/>
<rect x="457.4" y="583.9" width="1.8" height="1.2"/>
<rect x="463.3" y="584.9" width="1.8" height="1.2"/>
<rect x="469.3" y="585.8" width="1.8" height="1.2"/>
<rect x="475.3" y="586.8" width="1.8" height="1.2"/>
<rect x="481.3" y="587.8" width="1.8" height="1.2"/>
<rect x="487.3" y="588.8" width="1.8" height="1.2"/>
<rect x="493.3" y="589.7" width="1.8" height="1.2"/>
<rect x="499.4" y="590.7" width="1.8" height="1.2"/>
<rect x="505.5" y="591.7" width="1.8" height="1.2"/>
<rect x="511.6" y="592.7" width="1.8" height="1.2"/>
<rect x="517.7" y="593.7" width="1.8" height="1.2"/>
<rect x="195.0" y="552.5" width="1.8" height="1.2"/>
<rect x="200.4" y="553.4" width="1.8" height="1.2"/>
<rect x="205.7" y="554.3" width="1.8" height="1.2"/>
<rect x="211.1" y="555.2" width="1.8" height="1.2"/>
<rect x="216.4" y="556.0" width="1.8" height="1.2"/>
<rect x="221.8" y="556.9" width="1.8" height="1.2"/>
<rect x="227.2" y="557.8" width="1.8" height="1.2"/>
<rect x="232.7" y="558.7" width="1.8" height="1.2"/>
<rect x="238.1" y="559.6" width="1.8" height="1.2"/>
<rect x="243.5" y="560.5" width="1.8" height="1.2"/>
<rect x="249.0" y="561.4" width="1.8" height="1.2"/>
<rect x="254.5" y="562.3" width="1.8" height="1.2"/>
<rect x="260.0" y="563.2" width="1.8" height="1.2"/>
<rect x="265.5" y="564.1" width="1.8" height="1.2"/>
<rect x="271.0" y="565.1" width="1.8" height="1.2"/>
<rect x="276.5" y="566.0" width="1.8" height="1.2"/>
<rect x="282.1" y="566.9" width="1.8" height="1.2"/>
<rect x="287.7" y="567.8" width="1.8" height="1.2"/>
<rect x="293.2" y="568.7" width="1.8" height="1.2"/>
<rect x="298.8" y="569.6" width="1.8" height="1.2"/>
<rect x="304.4" y="570.6" width="1.8" height="1.2"/>
<rect x="310.1" y="571.5" width="1.8" height="1.2"/>
<rect x="315.7" y="572.4" width="1.8" height="1.2"/>
<rect x="321.4" y="573.4" width="1.8" height="1.2"/>
<rect x="327.0" y="574.3" width="1.8" height="1.2"/>
<rect x="332.7" y="575.2" width="1.8" height="1.2"/>
<rect x="338.4" y="576.2" width="1.8" height="1.2"/>
<rect x="344.2" y="577.1" width="1.8" height="1.2"/>
<rect x="349.9" y="578.1" width="1.8" height="1.2"/>
<rect x="355.6" y="579.0" width="1.8" height="1.2"/>
<rect x="361.4" y="580.0" width="1.8" height="1.2"/>
<rect x="367.2" y="580.9" width="1.8" height="1.2"/>
<rect x="373.0" y="581.9" width="1.8" height="1.2"/>
<rect x="378.8" y="582.8" width="1.8" height="1.2"/>
<rect x="384.6" y="583.8" width="1.8" height="1.2"/>
<rect x="390.5" y="584.8" width="1.8" height="1.2"/>
<rect x="396.3" y="585.7" width="1.8" height="1.2"/>
<rect x="402.2" y="586.7" width="1.8" height="1.2"/>
<rect x="408.1" y="587.7" width="1.8" height="1.2"/>
<rect x="414.0" y="588.7" width="1.8" height="1.2"/>
<rect x="419.9" y="589.6" width="1.8" height="1.2"/>
<rect x="425.9" y="590.6" width="1.8" height="1.2"/>
<rect x="431.8" y="591.6" width="1.8" height="1.2"/>
<rect x="437.8" y="592.6" width="1.8" height="1.2"/>
<rect x="443.8" y="593.6" width="1.8" height="1.2"/>
<rect x="449.8" y="594.6" width="1.8" height="1.2"/>
<rect x="455.9" y="595.6" width="1.8" height="1.2"/>
<rect x="461.9" y="596.6" width="1.8" height="1.2"/>
<rect x="468.0" y="597.6" width="1.8" height="1.2"/>
<rect x="474.0" y="598.6" width="1.8" height="1.2"/>
<rect x="480.1" y="599.6" width="1.8" height="1.2"/>
<rect x="486.2" y="600.6" width="1.8" height="1.2"/>
<rect x="492.4" y="601.6" width="1.8" height="1.2"/>
<rect x="498.5" y="602.6" width="1.8" height="1.2"/>
<rect x="504.7" y="603.6" width="1.8" height="1.2"/>
<rect x="510.9" y="604.6" width="1.8" height="1.2"/>
<rect x="184.4" y="562.3" width="1.8" height="1.2"/>
<rect x="189.8" y="563.2" width="1.8" height="1.2"/>
<rect x="195.2" y="564.1" width="1.8" height="1.2"/>
<rect x="200.6" y="565.0" width="1.8" height="1.2"/>
<rect x="206.0" y="565.9" width="1.8" height="1.2"/>
<rect x="211.5" y="566.8" width="1.8" height="1.2"/>
<rect x="216.9" y="567.7" width="1.8" height="1.2"/>
<rect x="222.4" y="568.7" width="1.8" height="1.2"/>
<rect x="227.9" y="569.6" width="1.8" height="1.2"/>
<rect x="233.4" y="570.5" width="1.8" height="1.2"/>
<rect x="238.9" y="571.4" width="1.8" height="1.2"/>
<rect x="244.5" y="572.4" width="1.8" height="1.2"/>
<rect x="250.0" y="573.3" width="1.8" height="1.2"/>
<rect x="255.6" y="574.2" width="1.8" height="1.2"/>
<rect x="261.2" y="575.2" width="1.8" height="1.2"/>
<rect x="266.8" y="576.1" width="1.8" height="1.2"/>
<rect x="272.4" y="577.0" width="1.8" height="1.2"/>
<rect x="278.0" y="578.0" width="1.8" height="1.2"/>
<rect x="283.7" y="578.9" width="1.8" height="1.2"/>
<rect x="289.3" y="579.9" width="1.8" height="1.2"/>
<rect x="295.0" y="580.8" width="1.8" height="1.2"/>
<rect x="300.7" y="581.8" width="1.8" height="1.2"/>
<rect x="306.4" y="582.8" width="1.8" height="1.2"/>
<rect x="312.1" y="583.7" width="1.8" height="1.2"/>
<rect x="317.8" y="584.7" width="1.8" height="1.2"/>
<rect x="323.6" y="585.6" width="1.8" height="1.2"/>
<rect x="329.4" y="586.6" width="1.8" height="1.2"/>
<rect x="335.2" y="587.6" width="1.8" height="1.2"/>
<rect x="341.0" y="588.6" width="1.8" height="1.2"/>
<rect x="346.8" y="589.5" width="1.8" height="1.2"/>
<rect x="352.6" y="590.5" width="1.8" height="1.2"/>
<rect x="358.5" y="591.5" width="1.8" height="1.2"/>
<rect x="364.3" y="592.5" width="1.8" height="1.2"/>
<rect x="370.2" y="593.5" width="1.8" height="1.2"/>
<rect x="376.1" y="594.5" width="1.8" height="1.2"/>
<rect x="382.0" y="595.4" width="1.8" height="1.2"/>
<rect x="387.9" y="596.4" width="1.8" height="1.2"/>
<rect x="393.9" y="597.4" width="1.8" height="1.2"/>
<rect x="399.9" y="598.4" width="1.8" height="1.2"/>
<rect x="405.8" y="599.4" width="1.8" height="1.2"/>
<rect x="411.8" y="600.5" width="1.8" height="1.2"/>
<rect x="417.8" y="601.5" width="1.8" height="1.2"/>
<rect x="423.9" y="602.5" width="1.8" height="1.2"/>
<rect x="429.9" y="603.5" width="1.8" height="1.2"/>
<rect x="436.0" y="604.5" width="1.8" height="1.2"/>
<rect x="442.1" y="605.5" width="1.8" height="1.2"/>
<rect x="448.2" y="606.6" width="1.8" height="1.2"/>
<rect x="454.3" y="607.6" width="1.8" height="1.2"/>
<rect x="460.4" y="608.6" width="1.8" height="1.2"/>
<rect x="466.6" y="609.6" width="1.8" height="1.2"/>
<rect x="472.8" y="610.7" width="1.8" height="1.2"/>
<rect x="478.9" y="611.7" width="1.8" height="1.2"/>
<rect x="485.2" y="612.8" width="1.8" height="1.2"/>
<rect x="491.4" y="613.8" width="1.8" height="1.2"/>
<rect x="497.6" y="614.9" width="1.8" height="1.2"/>
<rect x="503.9" y="615.9" width="1.8" height="1.2"/>
<rect x="173.5" y="572.3" width="1.8" height="1.2"/>
<rect x="178.9" y="573.2" width="1.8" height="1.2"/>
<rect x="184.4" y="574.2" width="1.8" height="1.2"/>
<rect x="189.9" y="575.1" width="1.8" height="1.2"/>
<rect x="195.3" y="576.0" width="1.8" height="1.2"/>
<rect x="200.8" y="577.0" width="1.8" height="1.2"/>
<rect x="206.4" y="577.9" width="1.8" height="1.2"/>
<rect x="211.9" y="578.9" width="1.8" height="1.2"/>
<rect x="217.5" y="579.8" width="1.8" height="1.2"/>
<rect x="223.0" y="580.8" width="1.8" height="1.2"/>
<rect x="228.6" y="581.7" width="1.8" height="1.2"/>
<rect x="234.2" y="582.7" width="1.8" height="1.2"/>
<rect x="239.8" y="583.6" width="1.8" height="1.2"/>
<rect x="245.4" y="584.6" width="1.8" height="1.2"/>
<rect x="251.1" y="585.5" width="1.8" height="1.2"/>
<rect x="256.8" y="586.5" width="1.8" height="1.2"/>
<rect x="262.4" y="587.5" width="1.8" height="1.2"/>
<rect x="268.1" y="588.5" width="1.8" height="1.2"/>
<rect x="273.8" y="589.4" width="1.8" height="1.2"/>
<rect x="279.5" y="590.4" width="1.8" height="1.2"/>
<rect x="285.3" y="591.4" width="1.8" height="1.2"/>
<rect x="291.0" y="592.4" width="1.8" height="1.2"/>
<rect x="296.8" y="593.4" width="1.8" height="1.2"/>
<rect x="302.6" y="594.3" width="1.8" height="1.2"/>
<rect x="308.4" y="595.3" width="1.8" height="1.2"/>
<rect x="314.2" y="596.3" width="1.8" height="1.2"/>
<rect x="320.1" y="597.3" width="1.8" height="1.2"/>
<rect x="325.9" y="598.3" width="1.8" height="1.2"/>
<rect x="331.8" y="599.3" width="1.8" height="1.2"/>
<rect x="337.7" y="600.3" width="1.8" height="1.2"/>
<rect x="343.6" y="601.3" width="1.8" height="1.2"/>
<rect x="349.5" y="602.4" width="1.8" height="1.2"/>
<rect x="355.4" y="603.4" width="1.8" height="1.2"/>
<rect x="361.4" y="604.4" width="1.8" height="1.2"/>
<rect x="367.3" y="605.4" width="1.8" height="1.2"/>
<rect x="373.3" y="606.4" width="1.8" height="1.2"/>
<rect x="379.3" y="607.5" width="1.8" height="1.2"/>
<rect x="385.3" y="608.5" width="1.8" height="1.2"/>
<rect x="391.4" y="609.5" width="1.8" height="1.2"/>
<rect x="397.4" y="610.5" width="1.8" height="1.2"/>
<rect x="403.5" y="611.6" width="1.8" height="1.2"/>
<rect x="409.6" y="612.6" width="1.8" height="1.2"/>
<rect x="415.7" y="613.7" width="1.8" height="1.2"/>
<rect x="421.8" y="614.7" width="1.8" height="1.2"/>
<rect x="428.0" y="615.8" width="1.8" height="1.2"/>
<rect x="434.1" y="616.8" width="1.8" height="1.2"/>
<rect x="440.3" y="617.9" width="1.8" height="1.2"/>
<rect x="446.5" y="618.9" width="1.8" height="1.2"/>
<rect x="452.7" y="620.0" width="1.8" height="1.2"/>
<rect x="458.9" y="621.1" width="1.8" height="1.2"/>
<rect x="465.2" y="622.1" width="1.8" height="1.2"/>
<rect x="471.4" y="623.2" width="1.8" height="1.2"/>
<rect x="477.7" y="624.3" width="1.8" height="1.2"/>
<rect x="484.0" y="625.3" width="1.8" height="1.2"/>
<rect x="490.3" y="626.4" width="1.8" height="1.2"/>
<rect x="496.7" y="627.5" width="1.8" height="1.2"/>
</g>
<line x1="161.4" y1="582.9" x2="493.4" y2="640.3" stroke="#d5e2ee" stroke-width="1" stroke-dasharray="2.5 3.5" stroke-opacity="0.7"/>
<line x1="493.6" y1="640.3" x2="580.0" y2="500.2" stroke="#d5e2ee" stroke-width="1" stroke-dasharray="1.3 1.9" stroke-opacity="0.75"/>
<g stroke="#00ff00" stroke-width="1.25" fill="none">
<line x1="295.4" y1="461.4" x2="292.0" y2="464.5"/>
<line x1="297.3" y1="461.7" x2="293.9" y2="464.8"/>
<line x1="299.2" y1="461.9" x2="295.8" y2="465.1"/>
<line x1="301.1" y1="462.2" x2="297.7" y2="465.3"/>
<line x1="303.0" y1="462.5" x2="298.5" y2="466.6"/>
<line x1="305.0" y1="462.7" x2="301.6" y2="465.9"/>
<line x1="306.9" y1="463.0" x2="303.5" y2="466.1"/>
<line x1="308.8" y1="463.3" x2="305.5" y2="466.4"/>
<line x1="310.7" y1="463.5" x2="307.4" y2="466.7"/>
<line x1="312.7" y1="463.8" x2="306.4" y2="469.7"/>
<line x1="314.6" y1="464.1" x2="311.3" y2="467.2"/>
<line x1="316.5" y1="464.3" x2="313.2" y2="467.5"/>
<line x1="318.5" y1="464.6" x2="315.2" y2="467.8"/>
<line x1="320.4" y1="464.9" x2="317.1" y2="468.0"/>
<line x1="322.3" y1="465.1" x2="317.9" y2="469.4"/>
<line x1="324.3" y1="465.4" x2="321.0" y2="468.6"/>
<line x1="326.2" y1="465.7" x2="322.9" y2="468.8"/>
<line x1="328.2" y1="466.0" x2="324.9" y2="469.1"/>
<line x1="330.1" y1="466.2" x2="326.8" y2="469.4"/>
<line x1="332.0" y1="466.5" x2="325.9" y2="472.4"/>
<line x1="334.0" y1="466.8" x2="330.7" y2="469.9"/>
<line x1="335.9" y1="467.0" x2="332.7" y2="470.2"/>
<line x1="337.9" y1="467.3" x2="334.7" y2="470.5"/>
<line x1="339.8" y1="467.6" x2="336.6" y2="470.8"/>
<line x1="341.8" y1="467.8" x2="337.5" y2="472.1"/>
<line x1="343.8" y1="468.1" x2="340.5" y2="471.3"/>
<line x1="345.7" y1="468.4" x2="342.5" y2="471.6"/>
<line x1="347.7" y1="468.7" x2="344.5" y2="471.9"/>
<line x1="349.6" y1="468.9" x2="346.5" y2="472.1"/>
<line x1="351.6" y1="469.2" x2="345.6" y2="475.2"/>
<line x1="353.6" y1="469.5" x2="350.4" y2="472.7"/>
<line x1="355.5" y1="469.8" x2="352.4" y2="473.0"/>
<line x1="357.5" y1="470.0" x2="354.4" y2="473.2"/>
<line x1="359.5" y1="470.3" x2="356.3" y2="473.5"/>
<line x1="361.5" y1="470.6" x2="357.3" y2="474.9"/>
<line x1="363.4" y1="470.9" x2="360.3" y2="474.1"/>
<line x1="365.4" y1="471.1" x2="362.3" y2="474.3"/>
<line x1="367.4" y1="471.4" x2="364.3" y2="474.6"/>
<line x1="369.4" y1="471.7" x2="366.3" y2="474.9"/>
<line x1="371.3" y1="472.0" x2="365.5" y2="478.0"/>
<line x1="373.3" y1="472.2" x2="370.2" y2="475.5"/>
<line x1="375.3" y1="472.5" x2="372.2" y2="475.7"/>
<line x1="377.3" y1="472.8" x2="374.2" y2="476.0"/>
<line x1="379.3" y1="473.1" x2="376.2" y2="476.3"/>
<line x1="381.3" y1="473.3" x2="377.2" y2="477.7"/>
<line x1="383.3" y1="473.6" x2="380.2" y2="476.9"/>
<line x1="385.3" y1="473.9" x2="382.2" y2="477.1"/>
<line x1="387.3" y1="474.2" x2="384.2" y2="477.4"/>
<line x1="389.3" y1="474.4" x2="386.3" y2="477.7"/>
<line x1="391.3" y1="474.7" x2="385.6" y2="480.8"/>
<line x1="393.3" y1="475.0" x2="390.3" y2="478.3"/>
<line x1="395.3" y1="475.3" x2="392.3" y2="478.5"/>
<line x1="397.3" y1="475.6" x2="394.3" y2="478.8"/>
<line x1="399.3" y1="475.8" x2="396.3" y2="479.1"/>
<line x1="401.3" y1="476.1" x2="397.3" y2="480.5"/>
<line x1="403.3" y1="476.4" x2="400.4" y2="479.7"/>
<line x1="405.3" y1="476.7" x2="402.4" y2="480.0"/>
<line x1="407.4" y1="477.0" x2="404.4" y2="480.2"/>
<line x1="409.4" y1="477.2" x2="406.4" y2="480.5"/>
<line x1="411.4" y1="477.5" x2="405.9" y2="483.7"/>
<line x1="413.4" y1="477.8" x2="410.5" y2="481.1"/>
<line x1="415.4" y1="478.1" x2="412.5" y2="481.4"/>
<line x1="417.5" y1="478.4" x2="414.6" y2="481.7"/>
<line x1="419.5" y1="478.6" x2="416.6" y2="481.9"/>
<line x1="421.5" y1="478.9" x2="417.7" y2="483.3"/>
<line x1="423.6" y1="479.2" x2="420.7" y2="482.5"/>
<line x1="425.6" y1="479.5" x2="422.7" y2="482.8"/>
<line x1="427.6" y1="479.8" x2="424.8" y2="483.1"/>
<line x1="429.7" y1="480.1" x2="426.8" y2="483.4"/>
<line x1="431.7" y1="480.3" x2="426.4" y2="486.6"/>
<line x1="433.7" y1="480.6" x2="430.9" y2="483.9"/>
<line x1="435.8" y1="480.9" x2="433.0" y2="484.2"/>
<line x1="437.8" y1="481.2" x2="435.0" y2="484.5"/>
<line x1="439.9" y1="481.5" x2="437.1" y2="484.8"/>
<line x1="441.9" y1="481.8" x2="438.2" y2="486.2"/>
<line x1="444.0" y1="482.0" x2="441.2" y2="485.4"/>
<line x1="446.0" y1="482.3" x2="443.3" y2="485.7"/>
<line x1="448.1" y1="482.6" x2="445.3" y2="486.0"/>
<line x1="450.1" y1="482.9" x2="447.4" y2="486.2"/>
<line x1="452.2" y1="483.2" x2="447.0" y2="489.5"/>
<line x1="454.3" y1="483.5" x2="451.5" y2="486.8"/>
<line x1="456.3" y1="483.8" x2="453.6" y2="487.1"/>
<line x1="458.4" y1="484.0" x2="455.7" y2="487.4"/>
<line x1="460.5" y1="484.3" x2="457.7" y2="487.7"/>
<line x1="462.5" y1="484.6" x2="458.9" y2="489.1"/>
<line x1="464.6" y1="484.9" x2="461.9" y2="488.3"/>
<line x1="466.7" y1="485.2" x2="464.0" y2="488.6"/>
<line x1="468.8" y1="485.5" x2="466.1" y2="488.9"/>
<line x1="470.8" y1="485.8" x2="468.2" y2="489.2"/>
<line x1="472.9" y1="486.1" x2="467.9" y2="492.4"/>
<line x1="475.0" y1="486.4" x2="472.3" y2="489.7"/>
<line x1="477.1" y1="486.6" x2="474.4" y2="490.0"/>
<line x1="479.2" y1="486.9" x2="476.5" y2="490.3"/>
<line x1="481.2" y1="487.2" x2="478.6" y2="490.6"/>
<line x1="483.3" y1="487.5" x2="479.8" y2="492.0"/>
<line x1="485.4" y1="487.8" x2="482.8" y2="491.2"/>
<line x1="487.5" y1="488.1" x2="484.9" y2="491.5"/>
<line x1="489.6" y1="488.4" x2="487.0" y2="491.8"/>
<line x1="491.7" y1="488.7" x2="489.1" y2="492.1"/>
<line x1="493.8" y1="489.0" x2="489.0" y2="495.4"/>
<line x1="495.9" y1="489.3" x2="493.4" y2="492.7"/>
<line x1="498.0" y1="489.6" x2="495.5" y2="493.0"/>
<line x1="500.1" y1="489.8" x2="497.6" y2="493.3"/>
<line x1="502.2" y1="490.1" x2="499.7" y2="493.6"/>
<line x1="504.3" y1="490.4" x2="501.0" y2="495.0"/>
<line x1="506.4" y1="490.7" x2="503.9" y2="494.2"/>
<line x1="508.6" y1="491.0" x2="506.1" y2="494.4"/>
<line x1="510.7" y1="491.3" x2="508.2" y2="494.7"/>
<line x1="512.8" y1="491.6" x2="510.3" y2="495.0"/>
<line x1="514.9" y1="491.9" x2="510.3" y2="498.4"/>
<line x1="517.0" y1="492.2" x2="514.6" y2="495.6"/>
<line x1="519.2" y1="492.5" x2="516.7" y2="495.9"/>
<line x1="521.3" y1="492.8" x2="518.8" y2="496.2"/>
<line x1="523.4" y1="493.1" x2="521.0" y2="496.5"/>
<line x1="525.5" y1="493.4" x2="522.3" y2="498.0"/>
<line x1="527.7" y1="493.7" x2="525.3" y2="497.1"/>
<line x1="529.8" y1="494.0" x2="527.4" y2="497.4"/>
<line x1="531.9" y1="494.3" x2="529.5" y2="497.7"/>
<line x1="534.1" y1="494.6" x2="531.7" y2="498.0"/>
<line x1="536.2" y1="494.9" x2="531.8" y2="501.4"/>
<line x1="538.4" y1="495.2" x2="536.0" y2="498.6"/>
<line x1="540.5" y1="495.5" x2="538.2" y2="498.9"/>
<line x1="542.7" y1="495.8" x2="540.3" y2="499.2"/>
<line x1="544.8" y1="496.1" x2="542.5" y2="499.5"/>
<line x1="547.0" y1="496.4" x2="543.8" y2="501.0"/>
<line x1="549.1" y1="496.7" x2="546.8" y2="500.1"/>
<line x1="551.3" y1="497.0" x2="549.0" y2="500.4"/>
<line x1="553.4" y1="497.3" x2="551.1" y2="500.7"/>
<line x1="555.6" y1="497.6" x2="553.3" y2="501.1"/>
<line x1="557.7" y1="497.9" x2="553.5" y2="504.4"/>
<line x1="559.9" y1="498.2" x2="557.6" y2="501.7"/>
<line x1="562.1" y1="498.5" x2="559.8" y2="502.0"/>
<line x1="564.2" y1="498.8" x2="562.0" y2="502.3"/>
<line x1="566.4" y1="499.1" x2="564.2" y2="502.6"/>
<line x1="568.6" y1="499.4" x2="565.6" y2="504.1"/>
<line x1="570.8" y1="499.7" x2="568.5" y2="503.2"/>
<line x1="572.9" y1="500.0" x2="570.7" y2="503.5"/>
<line x1="575.1" y1="500.3" x2="572.9" y2="503.8"/>
<line x1="577.3" y1="500.6" x2="575.1" y2="504.1"/>
</g>
<line x1="295.7" y1="461.9" x2="577.7" y2="501.1" stroke="#00ff00" stroke-width="1.2" stroke-opacity="0.6"/>
<polygon points="295.7,460.2 161.9,583.0 165.6,583.6 298.1,460.6" fill="#ff0000"/>
<g stroke="#ff0000" stroke-width="1.1" fill="none">
<line x1="293.8" y1="460.8" x2="299.4" y2="461.6"/>
<line x1="293.0" y1="461.6" x2="298.6" y2="462.4"/>
<line x1="292.2" y1="462.3" x2="297.8" y2="463.1"/>
<line x1="291.4" y1="463.1" x2="297.0" y2="463.8"/>
<line x1="290.5" y1="463.8" x2="298.1" y2="464.9"/>
<line x1="289.7" y1="464.5" x2="295.4" y2="465.3"/>
<line x1="288.9" y1="465.3" x2="294.6" y2="466.1"/>
<line x1="288.1" y1="466.0" x2="293.8" y2="466.8"/>
<line x1="287.3" y1="466.8" x2="292.9" y2="467.6"/>
<line x1="286.4" y1="467.5" x2="296.5" y2="469.0"/>
<line x1="285.6" y1="468.3" x2="291.3" y2="469.1"/>
<line x1="284.8" y1="469.1" x2="290.5" y2="469.9"/>
<line x1="284.0" y1="469.8" x2="289.7" y2="470.6"/>
<line x1="283.1" y1="470.6" x2="288.8" y2="471.4"/>
<line x1="282.3" y1="471.3" x2="289.9" y2="472.4"/>
<line x1="281.5" y1="472.1" x2="287.2" y2="472.9"/>
<line x1="280.6" y1="472.9" x2="286.3" y2="473.7"/>
<line x1="279.8" y1="473.6" x2="285.5" y2="474.4"/>
<line x1="278.9" y1="474.4" x2="284.7" y2="475.2"/>
<line x1="278.1" y1="475.2" x2="288.2" y2="476.6"/>
<line x1="277.3" y1="475.9" x2="283.0" y2="476.8"/>
<line x1="276.4" y1="476.7" x2="282.2" y2="477.5"/>
<line x1="275.6" y1="477.5" x2="281.3" y2="478.3"/>
<line x1="274.7" y1="478.3" x2="280.5" y2="479.1"/>
<line x1="273.9" y1="479.0" x2="281.5" y2="480.2"/>
<line x1="273.0" y1="479.8" x2="278.8" y2="480.7"/>
<line x1="272.1" y1="480.6" x2="277.9" y2="481.4"/>
<line x1="271.3" y1="481.4" x2="277.1" y2="482.2"/>
<line x1="270.4" y1="482.2" x2="276.2" y2="483.0"/>
<line x1="269.6" y1="483.0" x2="279.8" y2="484.4"/>
<line x1="268.7" y1="483.8" x2="274.5" y2="484.6"/>
<line x1="267.8" y1="484.6" x2="273.6" y2="485.4"/>
<line x1="267.0" y1="485.3" x2="272.8" y2="486.2"/>
<line x1="266.1" y1="486.1" x2="271.9" y2="487.0"/>
<line x1="265.2" y1="486.9" x2="273.0" y2="488.1"/>
<line x1="264.3" y1="487.7" x2="270.2" y2="488.6"/>
<line x1="263.5" y1="488.5" x2="269.3" y2="489.4"/>
<line x1="262.6" y1="489.3" x2="268.4" y2="490.2"/>
<line x1="261.7" y1="490.1" x2="267.5" y2="491.0"/>
<line x1="260.8" y1="491.0" x2="271.1" y2="492.5"/>
<line x1="259.9" y1="491.8" x2="265.8" y2="492.6"/>
<line x1="259.1" y1="492.6" x2="264.9" y2="493.4"/>
<line x1="258.2" y1="493.4" x2="264.0" y2="494.3"/>
<line x1="257.3" y1="494.2" x2="263.1" y2="495.1"/>
<line x1="256.4" y1="495.0" x2="264.2" y2="496.2"/>
<line x1="255.5" y1="495.8" x2="261.4" y2="496.7"/>
<line x1="254.6" y1="496.7" x2="260.5" y2="497.5"/>
<line x1="253.7" y1="497.5" x2="259.6" y2="498.4"/>
<line x1="252.8" y1="498.3" x2="258.7" y2="499.2"/>
<line x1="251.9" y1="499.1" x2="262.3" y2="500.7"/>
<line x1="251.0" y1="500.0" x2="256.9" y2="500.8"/>
<line x1="250.1" y1="500.8" x2="256.0" y2="501.7"/>
<line x1="249.1" y1="501.6" x2="255.1" y2="502.5"/>
<line x1="248.2" y1="502.5" x2="254.1" y2="503.4"/>
<line x1="247.3" y1="503.3" x2="255.2" y2="504.5"/>
<line x1="246.4" y1="504.1" x2="252.3" y2="505.0"/>
<line x1="245.5" y1="505.0" x2="251.4" y2="505.9"/>
<line x1="244.6" y1="505.8" x2="250.5" y2="506.7"/>
<line x1="243.6" y1="506.7" x2="249.6" y2="507.6"/>
<line x1="242.7" y1="507.5" x2="253.2" y2="509.1"/>
<line x1="241.8" y1="508.4" x2="247.7" y2="509.3"/>
<line x1="240.8" y1="509.2" x2="246.8" y2="510.1"/>
<line x1="239.9" y1="510.1" x2="245.9" y2="511.0"/>
<line x1="239.0" y1="510.9" x2="244.9" y2="511.8"/>
<line x1="238.0" y1="511.8" x2="246.0" y2="513.0"/>
<line x1="237.1" y1="512.6" x2="243.1" y2="513.6"/>
<line x1="236.1" y1="513.5" x2="242.1" y2="514.4"/>
<line x1="235.2" y1="514.4" x2="241.2" y2="515.3"/>
<line x1="234.3" y1="515.2" x2="240.3" y2="516.2"/>
<line x1="233.3" y1="516.1" x2="243.9" y2="517.7"/>
<line x1="232.3" y1="517.0" x2="238.4" y2="517.9"/>
<line x1="231.4" y1="517.8" x2="237.4" y2="518.8"/>
<line x1="230.4" y1="518.7" x2="236.5" y2="519.7"/>
<line x1="229.5" y1="519.6" x2="235.5" y2="520.5"/>
<line x1="228.5" y1="520.5" x2="236.6" y2="521.7"/>
<line x1="227.6" y1="521.4" x2="233.6" y2="522.3"/>
<line x1="226.6" y1="522.2" x2="232.6" y2="523.2"/>
<line x1="225.6" y1="523.1" x2="231.7" y2="524.1"/>
<line x1="224.6" y1="524.0" x2="230.7" y2="525.0"/>
<line x1="223.7" y1="524.9" x2="234.4" y2="526.6"/>
<line x1="222.7" y1="525.8" x2="228.8" y2="526.7"/>
<line x1="221.7" y1="526.7" x2="227.8" y2="527.6"/>
<line x1="220.7" y1="527.6" x2="226.8" y2="528.5"/>
<line x1="219.7" y1="528.5" x2="225.8" y2="529.4"/>
<line x1="218.8" y1="529.4" x2="226.9" y2="530.7"/>
<line x1="217.8" y1="530.3" x2="223.9" y2="531.3"/>
<line x1="216.8" y1="531.2" x2="222.9" y2="532.2"/>
<line x1="215.8" y1="532.1" x2="221.9" y2="533.1"/>
<line x1="214.8" y1="533.0" x2="220.9" y2="534.0"/>
<line x1="213.8" y1="533.9" x2="224.6" y2="535.7"/>
<line x1="212.8" y1="534.8" x2="218.9" y2="535.8"/>
<line x1="211.8" y1="535.8" x2="217.9" y2="536.7"/>
<line x1="210.8" y1="536.7" x2="216.9" y2="537.7"/>
<line x1="209.8" y1="537.6" x2="215.9" y2="538.6"/>
<line x1="208.8" y1="538.5" x2="217.0" y2="539.8"/>
<line x1="207.7" y1="539.4" x2="213.9" y2="540.4"/>
<line x1="206.7" y1="540.4" x2="212.9" y2="541.4"/>
<line x1="205.7" y1="541.3" x2="211.9" y2="542.3"/>
<line x1="204.7" y1="542.2" x2="210.9" y2="543.2"/>
<line x1="203.7" y1="543.2" x2="214.6" y2="545.0"/>
<line x1="202.6" y1="544.1" x2="208.8" y2="545.1"/>
<line x1="201.6" y1="545.1" x2="207.8" y2="546.1"/>
<line x1="200.6" y1="546.0" x2="206.8" y2="547.0"/>
<line x1="199.5" y1="546.9" x2="205.8" y2="548.0"/>
<line x1="198.5" y1="547.9" x2="206.8" y2="549.3"/>
<line x1="197.5" y1="548.8" x2="203.7" y2="549.9"/>
<line x1="196.4" y1="549.8" x2="202.7" y2="550.8"/>
<line x1="195.4" y1="550.8" x2="201.6" y2="551.8"/>
<line x1="194.3" y1="551.7" x2="200.6" y2="552.7"/>
<line x1="193.3" y1="552.7" x2="204.3" y2="554.5"/>
<line x1="192.2" y1="553.6" x2="198.5" y2="554.7"/>
<line x1="191.2" y1="554.6" x2="197.4" y2="555.6"/>
<line x1="190.1" y1="555.6" x2="196.4" y2="556.6"/>
<line x1="189.0" y1="556.5" x2="195.3" y2="557.6"/>
<line x1="188.0" y1="557.5" x2="196.4" y2="558.9"/>
<line x1="186.9" y1="558.5" x2="193.2" y2="559.5"/>
<line x1="185.8" y1="559.5" x2="192.1" y2="560.5"/>
<line x1="184.8" y1="560.4" x2="191.1" y2="561.5"/>
<line x1="183.7" y1="561.4" x2="190.0" y2="562.5"/>
<line x1="182.6" y1="562.4" x2="193.8" y2="564.3"/>
<line x1="181.5" y1="563.4" x2="187.9" y2="564.5"/>
<line x1="180.4" y1="564.4" x2="186.8" y2="565.5"/>
<line x1="179.3" y1="565.4" x2="185.7" y2="566.5"/>
<line x1="178.3" y1="566.4" x2="184.6" y2="567.5"/>
<line x1="177.2" y1="567.4" x2="185.7" y2="568.8"/>
<line x1="176.1" y1="568.4" x2="182.4" y2="569.5"/>
<line x1="175.0" y1="569.4" x2="181.3" y2="570.5"/>
<line x1="173.9" y1="570.4" x2="180.2" y2="571.5"/>
<line x1="172.8" y1="571.4" x2="179.1" y2="572.5"/>
<line x1="171.6" y1="572.4" x2="182.9" y2="574.4"/>
<line x1="170.5" y1="573.4" x2="176.9" y2="574.5"/>
<line x1="169.4" y1="574.5" x2="175.8" y2="575.6"/>
<line x1="168.3" y1="575.5" x2="174.7" y2="576.6"/>
<line x1="167.2" y1="576.5" x2="173.6" y2="577.6"/>
<line x1="166.1" y1="577.5" x2="174.6" y2="579.0"/>
<line x1="164.9" y1="578.6" x2="171.4" y2="579.7"/>
<line x1="163.8" y1="579.6" x2="170.3" y2="580.7"/>
<line x1="162.7" y1="580.6" x2="169.1" y2="581.7"/>
<line x1="161.5" y1="581.7" x2="168.0" y2="582.8"/>
</g>
<line x1="493.4" y1="640.6" x2="496.5" y2="490.5" stroke="#93a4e2" stroke-width="2"/>
<line x1="496.5" y1="490.5" x2="500.6" y2="287.0" stroke="#587f90" stroke-width="1" fill="none" stroke-opacity="0.7"/>
<g stroke="#2c5b49" stroke-width="2.2" fill="none" stroke-linecap="butt">
<line x1="145.0" y1="250.7" x2="145.6" y2="264.7"/>
<line x1="145.0" y1="250.7" x2="158.9" y2="252.1"/>
<line x1="145.0" y1="250.7" x2="152.0" y2="246.9"/>
<line x1="289.2" y1="172.2" x2="289.4" y2="184.2"/>
<line x1="289.2" y1="172.2" x2="302.2" y2="173.3"/>
<line x1="289.2" y1="172.2" x2="284.8" y2="174.6"/>
<line x1="594.6" y1="197.4" x2="594.0" y2="210.4"/>
<line x1="594.6" y1="197.4" x2="581.6" y2="196.3"/>
<line x1="594.6" y1="197.4" x2="591.7" y2="200.2"/>
<line x1="500.6" y1="287.0" x2="500.3" y2="302.0"/>
<line x1="500.6" y1="287.0" x2="485.7" y2="285.5"/>
<line x1="500.6" y1="287.0" x2="505.7" y2="282.2"/>
</g>
</svg>
<div class="ov" style="left:8px;top:10px;width:293px;height:34px;">Printer: H479 (90002920)
Origin at:(-140.0, 0.0, 0.0)   Size (140.0, 140.0, 140.0)</div>
<div class="ov" style="left:8px;top:47px;width:251px;height:49px;border-color:#2c0208;background:rgba(74,70,90,0.3);">(769 x 620)
NVIDIA GeForce GTX 660M OpenGL Engine
2.1 NVIDIA-8.18.22 310.40.05f01</div>
<div class="ov" style="left:8px;top:591px;width:103px;height:19px;border-color:#14141a;">Loaded models: 0</div>
</div>

<div id="side" class="abs"></div>
<div class="abs glabel" style="left:784px;top:89.5px;letter-spacing:-0.3px;">Parameter</div>
<div class="abs gbox" style="left:777px;top:102px;width:171px;height:177px;"></div>
<div class="abs radio on" style="left:800px;top:116px;"></div><div class="abs rl" style="left:819px;top:116.5px;">Move</div>
<div class="abs radio" style="left:865px;top:116px;"></div><div class="abs rl" style="left:884px;top:116.5px;">Scale</div>
<div class="abs radio" style="left:800px;top:142px;"></div><div class="abs rl" style="left:819px;top:141.5px;">Rotate</div>
<div id="input" class="abs">input</div>
<div class="abs radio on" style="left:800px;top:208px;"></div><div class="abs rl" style="left:820px;top:207.5px;font-size:13.5px;">1</div>
<div class="abs radio" style="left:865px;top:208px;"></div><div class="abs rl" style="left:884px;top:207.5px;font-size:13.5px;">2</div>
<div class="abs radio" style="left:800px;top:232px;"></div><div class="abs rl" style="left:820px;top:231.5px;font-size:13.5px;">5</div>
<div class="abs radio" style="left:865px;top:232px;"></div><div class="abs rl" style="left:884px;top:231.5px;font-size:13.5px;">10</div>
<div class="abs radio" style="left:800px;top:256px;"></div><div class="abs rl" style="left:820px;top:255.5px;font-size:13.5px;">20</div>
<div class="abs radio" style="left:865px;top:256px;"></div><div class="abs rl" style="left:884px;top:255.5px;font-size:13.5px;">50</div>

<div class="abs glabel" style="left:784px;top:288.5px;letter-spacing:0.25px;">Tranform</div>
<div class="abs gbox" style="left:777px;top:301px;width:171px;height:68px;"></div>
<div class="abs sbtn" style="left:788px;top:309px;width:40px;height:22px;">X&ndash;</div>
<div class="abs sbtn" style="left:842px;top:309px;width:40px;height:22px;">Y&ndash;</div>
<div class="abs sbtn" style="left:897px;top:309px;width:40px;height:22px;">Z&ndash;</div>
<div class="abs sbtn" style="left:788px;top:339px;width:40px;height:22px;">X+</div>
<div class="abs sbtn" style="left:842px;top:339px;width:40px;height:22px;">Y+</div>
<div class="abs sbtn" style="left:897px;top:339px;width:40px;height:22px;">Z+</div>

<div class="abs sbtn" style="left:800px;top:411px;width:60px;height:22px;">Scale</div>
<div class="abs sbtn" style="left:867px;top:411px;width:60px;height:22px;">Mirror</div>
<div class="abs bbtn" style="left:807px;top:449px;width:113px;height:32px;">Auto Placement</div>
<div class="abs bbtn" style="left:823px;top:508px;width:80px;height:32px;">Load</div>
<div class="abs bbtn" style="left:779px;top:548px;width:80px;height:32px;">Unload</div>
<div class="abs bbtn" style="left:867px;top:548px;width:80px;height:32px;">Unload All</div>

<div id="status" class="abs">Status</div>
<div class="abs" style="left:957px;top:77px;width:1px;height:639px;background:#f6f6f6;"></div>
<div class="abs" style="left:958px;top:0;width:1px;height:716px;background:linear-gradient(#9a9a9a,#7a7a7a 77px,#757575);"></div>
</body></html>
